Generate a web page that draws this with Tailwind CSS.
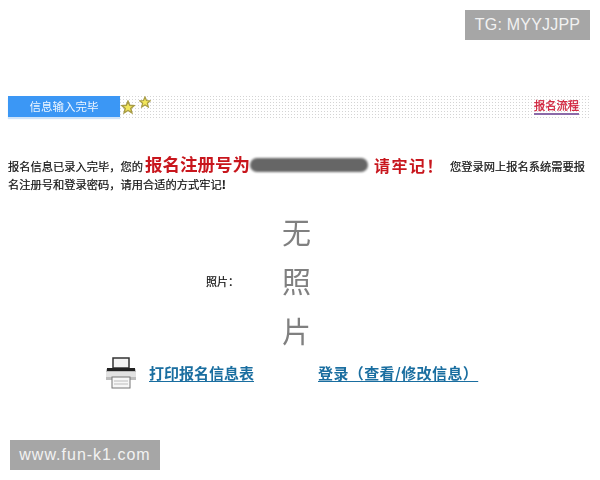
<!DOCTYPE html>
<html lang="zh">
<head>
<meta charset="utf-8">
<script src="https://cdn.jsdelivr.net/npm/@tailwindcss/browser@4"></script>
</head>
<body class="bg-white">
<div class="relative w-[600px] h-[480px] overflow-hidden bg-white font-['Noto_Sans_CJK_SC','Liberation_Sans',sans-serif]">
  <main class="pt-[95px] pl-[8px] pr-[10px] blur-[0.4px]">
    <div class="flex items-center justify-between h-[23px] bg-[radial-gradient(circle,#d4d4d4_0.9px,transparent_1px)] bg-[length:3px_3px]">
      <div class="flex items-center h-full relative">
        <div class="w-[112px] h-[21px] bg-[#3b97f5] text-[#eef6ff] text-[11.500px] leading-[20px] text-center shadow-[0_2px_1px_#cfe3f8]">信息输入完毕</div>
        <svg class="absolute left-[113px] top-[5px] w-[14px] h-[14px]" viewBox="0 0 24 24"><path d="M12 2l3 7 7.500.6-5.700 5 1.800 7.400L12 18l-6.600 4 1.800-7.400-5.700-5L9 9z" fill="#f2e65a" stroke="#a89c45" stroke-width="2.500"/></svg>
        <svg class="absolute left-[131px] top-[1px] w-[12px] h-[12px]" viewBox="0 0 24 24"><path d="M12 2l3 7 7.500.6-5.700 5 1.800 7.400L12 18l-6.600 4 1.800-7.400-5.700-5L9 9z" fill="#f2e65a" stroke="#a89c45" stroke-width="2.500"/></svg>
      </div>
      <a class="mr-[11px] text-[11.250px] leading-[15px] text-[#d0203a] [-webkit-text-stroke:0.3px_#d0203a] border-b-2 border-[#8a6aa8]">报名流程</a>
    </div>

    <div class="mt-[35px] w-[585px] text-[11.250px] text-[#111] [-webkit-text-stroke:0.2px_#111]">
      <p class="h-[23px] flex items-center whitespace-nowrap">
        <span class="translate-y-[2px]">报名信息已录入完毕，您的</span>
        <span class="ml-[2px] text-[17.500px] font-bold text-[#c8161d] [-webkit-text-stroke:0]">报名注册号为</span>
        <span class="inline-block w-[118px] h-[14px] rounded-full bg-[#666] blur-[1px]"></span>
        <span class="ml-[6px] text-[16px] font-bold text-[#c8161d] tracking-[1.500px] [-webkit-text-stroke:0]">请牢记！</span>
        <span class="ml-[6px] translate-y-[2px]">您登录网上报名系统需要报</span>
      </p>
      <p class="h-[16px] leading-[16px]">名注册号和登录密码，请用合适的方式牢记<b>!</b></p>
    </div>

    <div class="mt-[15px] flex items-center h-[148px]">
      <div class="w-[274px] pl-[198px] text-[11px] text-[#111] [-webkit-text-stroke:0.2px_#111] leading-none whitespace-nowrap">照片：</div>
      <div class="w-[29px] text-[29px] leading-[49.500px] text-[#808080]">无照片</div>
    </div>

    <div class="flex items-center h-[36px]">
      <svg class="ml-[97px] w-[32px] h-[32px]" viewBox="0 0 32 32">
        <rect x="8" y="1" width="16" height="10" fill="#f4f4f4" stroke="#333" stroke-width="1.500"/>
        <path d="M4 11h24a3 3 0 0 1 3 3v9H1v-9a3 3 0 0 1 3-3z" fill="#bdbdbd"/>
        <rect x="2" y="11" width="28" height="3" fill="#222"/>
        <rect x="1" y="15" width="30" height="5" fill="#e2e2e2"/>
        <rect x="7" y="20" width="18" height="11" fill="#f7f7f7" stroke="#777"/>
        <path d="M9 24h14M9 27h14" stroke="#bdbdbd"/>
      </svg>
      <a class="ml-[12px] w-[169px] text-[15px] leading-[18px] font-bold text-[#1a6ea0] whitespace-nowrap"><span class="underline underline-offset-2">打印报名信息表</span></a>
      <a class="text-[15px] tracking-[0.400px] leading-[18px] font-bold text-[#1a6ea0] whitespace-nowrap underline underline-offset-2">登录（查看/修改信息）</a>
    </div>
  </main>

  <div class="absolute top-[10px] right-[10px] w-[125px] h-[30px] bg-[#a6a6a6] text-[#f2f2f2] text-[16px] leading-[30px] text-center font-['Liberation_Sans',sans-serif] tracking-[0.200px]">TG: MYYJJPP</div>
  <div class="absolute left-[10px] top-[440px] w-[150px] h-[30px] bg-[#a6a6a6] text-[#f2f2f2] text-[16px] leading-[30px] text-center font-['Liberation_Sans',sans-serif] tracking-[1px]">www.fun-k1.com</div>
</div>
</body>
</html>
